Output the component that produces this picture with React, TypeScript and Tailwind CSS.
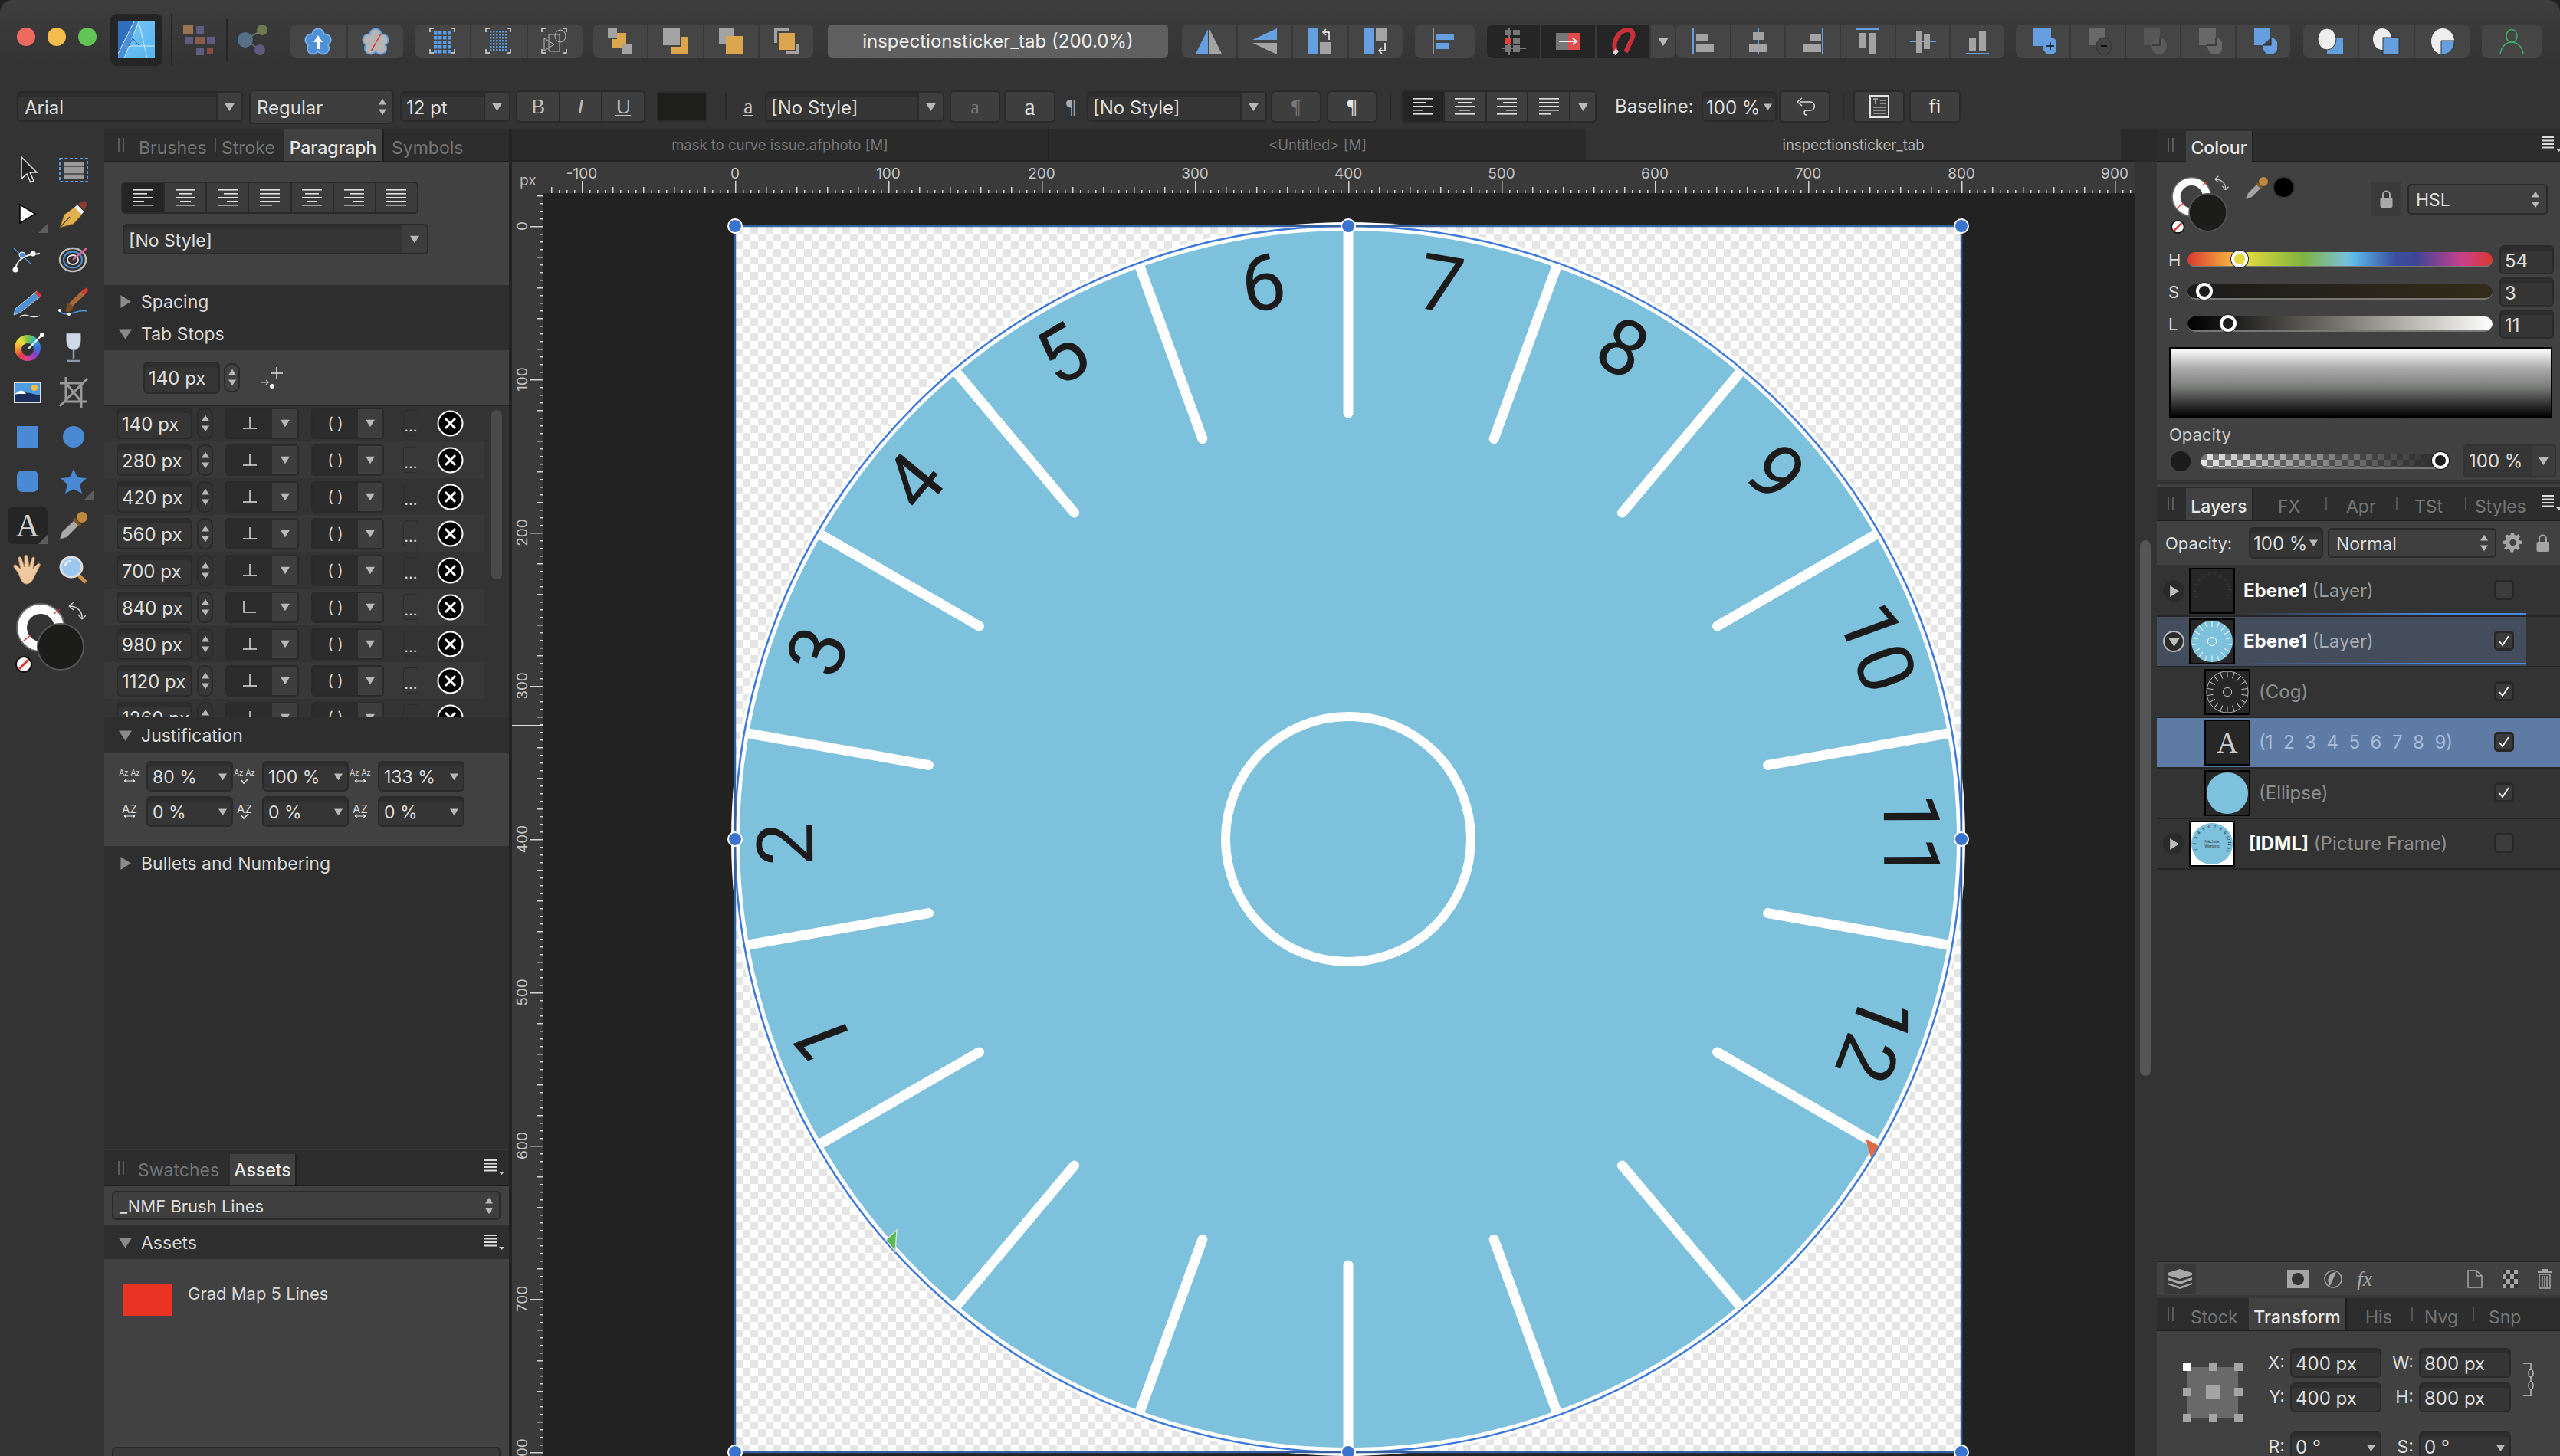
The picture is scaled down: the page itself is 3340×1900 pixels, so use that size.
import React from "react";

type CN = { className?: string; children?: React.ReactNode };

const Tri = ({ d = "down", s = 14, c = "#b8b8b8" }: { d?: string; s?: number; c?: string }) => (
  <svg width={s} height={s} viewBox="0 0 14 14" className="shrink-0">
    <polygon fill={c} points={d === "down" ? "0,2 14,2 7,13" : d === "up" ? "0,12 14,12 7,1" : "2,0 13,7 2,14"} />
  </svg>
);
const Stepper = ({ className = "" }: { className?: string }) => (
  <div className={`flex flex-col items-center justify-center gap-[3px] ${className}`}>
    <Tri d="up" s={10} />
    <Tri d="down" s={10} />
  </div>
);
const Well = ({ className = "", children }: CN) => (
  <div className={`flex items-center shrink-0 overflow-hidden rounded-[6px] bg-[#353535] border-2 border-[#2a2a2a] shadow-[inset_0_5px_0_#2d2d2d] text-[#dedede] ${className}`}>{children}</div>
);
const Grip = ({ className = "" }: { className?: string }) => (
  <div className={`flex gap-[4px] shrink-0 h-[18px] ${className}`}>
    <div className="w-[2px] h-full bg-[#5b5b5b]" />
    <div className="w-[2px] h-full bg-[#5b5b5b]" />
  </div>
);
const Menu = ({ className = "" }: { className?: string }) => (
  <svg width="26" height="24" viewBox="0 0 26 24" className={`shrink-0 ${className}`}>
    <path d="M0 2h16M0 6.500h16M0 11h16M0 15.500h16" stroke="#ddd" strokeWidth="2" />
    <polygon points="19,17 26,17 22.500,21" fill="#ccc" />
  </svg>
);
const Tab = ({ t, on, className = "" }: { t: string; on?: boolean; className?: string }) => (
  <div className={`flex items-center h-full shrink-0 whitespace-nowrap text-[23px] pt-[8px] ${on ? "justify-center bg-[#414141] text-[#e8e8e8] font-medium border-r-2 border-[#1f1f1f]" : "text-[#757575]"} ${className}`}>{t}</div>
);
const TSep = ({ className = "" }: { className?: string }) => <div className={`w-[2px] h-[18px] bg-[#555] shrink-0 ${className}`} />;

/* ---------- top toolbar icons ---------- */
const S36 = ({ children }: CN) => <svg width="36" height="36" viewBox="0 0 36 36" className="shrink-0">{children}</svg>;
const Flower = ({ fill, line, slash }: { fill: string; line: string; slash?: boolean }) => {
  const pts = [[18, 9], [9, 16], [27, 16], [11.500, 27], [24.500, 27]];
  return (
    <S36>
      {pts.map((p, i) => <circle key={i} cx={p[0]} cy={p[1]} r={8.600} fill={line} />)}
      {pts.map((p, i) => <circle key={i} cx={p[0]} cy={p[1]} r={6.800} fill={fill} />)}
      <circle cx="18" cy="18" r="8" fill={fill} />
      {slash ? <path d="M25 8 L12 31" stroke="#e0352b" strokeWidth="1.500" /> : <polygon points="18,10 12,19 16,19 16,28 20,28 20,19 24,19" fill="#fff" />}
    </S36>
  );
};
const Brackets = () => <path d="M1 6V1H6M28 1h5v5M33 28v5h-5M6 33H1v-5" stroke="#ddd" strokeWidth="1.500" fill="none" />;
const Dots = ({ cols, rows, s, p, x0, y0 }: { cols: number; rows: number; s: number; p: number; x0: number; y0: number }) => (
  <>
    {Array.from({ length: cols * rows }).map((_, i) => (
      <rect key={i} x={x0 + (i % cols) * p} y={y0 + Math.floor(i / cols) * p} width={s} height={s} fill="#5b9be0" />
    ))}
  </>
);
const G = "#a3a3a3";
const O = "#dca64f";
const B = "#659fe0";

const Btn = ({ children, className = "" }: CN) => <div className={`flex-1 flex items-center justify-center border-r-2 border-[#383838] last:border-r-0 ${className}`}>{children}</div>;
const Grp = ({ className = "", children }: CN) => <div className={`flex h-[44px] mt-[4px] rounded-[8px] bg-[#454545] overflow-hidden shrink-0 ${className}`}>{children}</div>;

const Toolbar1 = () => (
  <div className="flex items-center h-[68px] mt-[18px] pl-[22px]">
    <div className="flex gap-[16px] shrink-0 mt-[-8px]">
      <div className="w-[24px] h-[24px] rounded-full bg-[#ee6a5f]" />
      <div className="w-[24px] h-[24px] rounded-full bg-[#f5bd4f]" />
      <div className="w-[24px] h-[24px] rounded-full bg-[#61c454]" />
    </div>
    <div className="ml-[18px] w-[68px] h-[68px] rounded-[8px] bg-[#252525] flex items-center justify-center shrink-0">
      <svg width="48" height="48" viewBox="0 0 48 48">
        <defs><linearGradient id="ag" x1="0" y1="0" x2="1" y2="1"><stop offset="0" stopColor="#7cc8f5" /><stop offset="1" stopColor="#55b4f0" /></linearGradient></defs>
        <rect width="48" height="48" fill="url(#ag)" />
        <polygon points="0,0 21,0 0,42" fill="#2f6dbd" />
        <polygon points="0,42 21,0 27,0 8,48 0,48" fill="#4a8fd8" />
        <path d="M0 42 L21 0 M8 48 L27 0 M27 0 L38 48 M14 32 L48 32" stroke="#d6eefc" strokeWidth="1" fill="none" />
        <path d="M14 32 L19 22 L28 32" stroke="#23507f" strokeWidth="1" fill="none" />
      </svg>
    </div>
    <div className="ml-[11px] w-[2px] h-[68px] bg-[#252525] shrink-0" />
    <svg width="42" height="40" viewBox="0 0 42 40" className="ml-[14px] shrink-0">
      <rect x="0" y="0" width="13" height="12" fill="#9a7350" />
      <rect x="17" y="2" width="10" height="10" fill="#5e5c80" />
      <rect x="3" y="16" width="10" height="10" fill="#5e5c80" />
      <rect x="16" y="16" width="12" height="10" fill="#8a5a4c" />
      <rect x="31" y="16" width="10" height="10" fill="#5e5c80" />
      <rect x="17" y="30" width="10" height="10" fill="#5e5c80" />
      <rect x="31" y="30" width="8" height="8" fill="#8a4a44" />
    </svg>
    <div className="ml-[14px] w-[2px] h-[54px] bg-[#252525] shrink-0" />
    <svg width="41" height="40" viewBox="0 0 41 40" className="ml-[13px] shrink-0">
      <path d="M10 20 L32 7 M10 20 L29 33" stroke="#777" strokeWidth="1.500" />
      <circle cx="10" cy="20" r="10" fill="#557088" />
      <circle cx="32" cy="7" r="7" fill="#6d7a4f" />
      <circle cx="29" cy="33" r="7" fill="#5e5a80" />
    </svg>
    <Grp className="ml-[28px] w-[147px]">
      <Btn><Flower fill="#4f8fd6" line="#79b1ea" /></Btn>
      <Btn><Flower fill="#b5b5b5" line="#5f9be0" slash /></Btn>
    </Grp>
    <Grp className="ml-[16px] w-[218px]">
      <Btn><S36><Brackets /><Dots cols={4} rows={5} s={4.500} p={6} x0={6} y0={5} /></S36></Btn>
      <Btn><S36><Brackets /><Dots cols={6} rows={7} s={2.500} p={4} x0={6} y0={4} /></S36></Btn>
      <Btn><S36><Brackets /><path d="M4 14 L17 22 L4 30 Z M10 9 H24 V31 H10 Z" stroke="#bbb" strokeWidth="1" fill="none" /><ellipse cx="25" cy="11" rx="7" ry="8" stroke="#bbb" strokeWidth="1" fill="none" /></S36></Btn>
    </Grp>
    <Grp className="ml-[14px] w-[287px]">
      <Btn><S36><rect x="2" y="1" width="12" height="13" fill={G} /><rect x="14" y="7" width="12" height="14" fill={O} /><rect x="7" y="15" width="14" height="12" fill={O} /><rect x="21" y="22" width="12" height="13" fill={G} /></S36></Btn>
      <Btn><S36><rect x="2" y="1" width="22" height="22" fill={G} /><polygon points="26,12 34,12 34,34 13,34 13,25 26,25" fill={O} /></S36></Btn>
      <Btn><S36><rect x="2" y="1" width="20" height="20" fill={G} /><rect x="11" y="11" width="22" height="23" fill={O} /></S36></Btn>
      <Btn><S36><polygon points="2,1 22,1 22,5 6,5 6,20 2,20" fill={G} /><rect x="8" y="7" width="21" height="22" fill={O} /><polygon points="30,22 34,22 34,35 18,35 18,31 30,31" fill={G} /></S36></Btn>
    </Grp>
    <div className="ml-[19px] w-[444px] h-[44px] mt-[4px] rounded-[6px] bg-[#5f5f5f] flex items-center justify-center shrink-0 text-[24px] text-[#ededed] whitespace-nowrap">inspectionsticker_tab (200.0%)</div>
    <Grp className="ml-[18px] w-[288px]">
      <Btn><S36><polygon points="17,2 17,34 1,34" fill={B} /><polygon points="19,2 19,34 35,34" fill={G} /></S36></Btn>
      <Btn><S36><polygon points="34,1 34,16 2,16" fill={B} /><polygon points="2,20 34,20 34,35" fill={G} /></S36></Btn>
      <Btn><S36><rect x="2" y="1" width="14" height="34" fill={B} /><rect x="18" y="19" width="15" height="16" fill={G} /><path d="M30 16V6H23M26 2 L22 6 L26 10" stroke="#fff" strokeWidth="1.500" fill="none" /></S36></Btn>
      <Btn><S36><rect x="2" y="1" width="14" height="34" fill={B} /><rect x="18" y="1" width="15" height="16" fill={G} /><path d="M30 20V30H23M26 26 L22 30 L26 34" stroke="#fff" strokeWidth="1.500" fill="none" /></S36></Btn>
    </Grp>
    <Grp className="ml-[16px] w-[78px]">
      <Btn><S36><path d="M3 1V35" stroke="#aaa" strokeWidth="1.500" /><rect x="6" y="8" width="24" height="8" fill={B} /><rect x="6" y="20" width="17" height="8" fill={B} /></S36></Btn>
    </Grp>
    <Grp className="ml-[16px] w-[246px] !bg-[#252525]">
      <Btn className="!border-[#3a3a3a]"><svg width="36" height="36" viewBox="0 0 36 36"><path d="M12 0V36M2 27H34" stroke="#ccc" strokeWidth="1" /><rect x="6" y="3" width="9" height="7" fill="#777" /><rect x="17" y="3" width="9" height="7" fill="#777" /><rect x="6" y="13" width="9" height="8" fill="#e23f3f" /><rect x="17" y="13" width="9" height="8" fill="#777" /><rect x="6" y="23" width="9" height="9" fill="#777" /><rect x="17" y="23" width="9" height="9" fill="#777" /></svg></Btn>
      <Btn className="!border-[#3a3a3a]"><S36><rect x="2" y="7" width="16" height="22" fill="#777" /><rect x="18" y="7" width="16" height="22" fill="#e24b4b" /><path d="M6 18H28M24 14 L29 18 L24 22" stroke="#eee" strokeWidth="2" fill="none" /></S36></Btn>
      <Btn><svg width="36" height="36" viewBox="0 0 36 36"><path d="M9 31 C4 20 12 4 24 3 C32 3 33 9 30 15 L22 32" stroke="#c92f3c" strokeWidth="6" fill="none" /><path d="M7 35 L11 29" stroke="#ddd" strokeWidth="5" /></svg></Btn>
      <div className="w-[32px] shrink-0 flex items-center justify-center bg-[#454545]"><Tri s={14} /></div>
    </Grp>
    <Grp className="ml-[1px] w-[428px]">
      <Btn><S36><path d="M5 1V35" stroke={B} strokeWidth="2" /><rect x="9" y="8" width="15" height="10" fill={G} /><rect x="9" y="22" width="23" height="10" fill={G} /></S36></Btn>
      <Btn><S36><path d="M18 1V35" stroke={B} strokeWidth="2" /><rect x="11" y="6" width="14" height="10" fill={G} /><rect x="6" y="21" width="24" height="11" fill={G} /></S36></Btn>
      <Btn><S36><path d="M31 1V35" stroke={B} strokeWidth="2" /><rect x="14" y="8" width="15" height="10" fill={G} /><rect x="5" y="22" width="24" height="10" fill={G} /></S36></Btn>
      <Btn><S36><path d="M3 2H33" stroke={B} strokeWidth="2" /><rect x="7" y="7" width="9" height="20" fill={G} /><rect x="20" y="7" width="9" height="27" fill={G} /></S36></Btn>
      <Btn><S36><path d="M1 18H35" stroke={B} strokeWidth="2" /><rect x="9" y="4" width="8" height="29" fill={G} /><rect x="19" y="8" width="8" height="20" fill={G} /></S36></Btn>
      <Btn><S36><path d="M3 34H33" stroke={B} strokeWidth="2" /><rect x="7" y="13" width="9" height="18" fill={G} /><rect x="20" y="4" width="9" height="27" fill={G} /></S36></Btn>
    </Grp>
    <Grp className="ml-[15px] w-[358px]">
      <Btn><S36><rect x="6" y="1" width="23" height="23" fill={B} /><ellipse cx="28" cy="24" rx="10" ry="11" fill={B} /><path d="M28 19V29M23 24H33" stroke="#111" strokeWidth="1.500" /></S36></Btn>
      <Btn><S36><rect x="6" y="1" width="22" height="22" fill="#686868" /><ellipse cx="26" cy="24" rx="10" ry="11" fill="#444" stroke="#333" /><path d="M22 24H30" stroke="#111" strokeWidth="2" /></S36></Btn>
      <Btn><S36><rect x="6" y="1" width="21" height="22" fill="#555" /><ellipse cx="26" cy="24" rx="10" ry="11" fill="#5b5b5b" /><path d="M17 23H27V13" fill="none" stroke="#333" strokeWidth="1.500" /></S36></Btn>
      <Btn><S36><rect x="6" y="1" width="22" height="22" fill="#686868" /><ellipse cx="27" cy="24" rx="10" ry="11" fill="#686868" /><path d="M17 23H28V13" fill="none" stroke="#333" strokeWidth="1.500" /></S36></Btn>
      <Btn><S36><rect x="6" y="1" width="21" height="22" fill={B} /><ellipse cx="27" cy="24" rx="10" ry="11" fill={B} /><path d="M17 23H28V13" fill="#454545" stroke="#222" strokeWidth="1" /></S36></Btn>
    </Grp>
    <Grp className="ml-[17px] w-[217px]">
      <Btn><S36><rect x="13" y="14" width="21" height="21" fill={B} /><ellipse cx="13" cy="15" rx="12" ry="14" fill="#eee" stroke="#333" /></S36></Btn>
      <Btn><S36><ellipse cx="12" cy="15" rx="12" ry="14" fill="#eee" /><rect x="13" y="13" width="21" height="22" fill={B} stroke="#333" /></S36></Btn>
      <Btn><S36><ellipse cx="18" cy="18" rx="15" ry="17" fill="#eee" /><path d="M16 17H33A15 17 0 0 1 16 35Z" fill={B} stroke="#333" /></S36></Btn>
    </Grp>
    <Grp className="ml-[16px] w-[78px]">
      <Btn><S36><ellipse cx="18" cy="11" rx="7" ry="8.500" fill="none" stroke="#3eb06e" strokeWidth="1.500" /><path d="M3 34C5 23 12 19 18 19C24 19 31 23 33 34" fill="none" stroke="#3eb06e" strokeWidth="1.500" /></S36></Btn>
    </Grp>
  </div>
);

const Serif = "font-['Liberation_Serif',serif]";
const Ghost = ({ className = "", children }: CN) => <div className={`flex items-center justify-center shrink-0 h-[42px] rounded-[6px] bg-[#3e3e3e] border-2 border-[#2a2a2a] ${className}`}>{children}</div>;
const AlignLines = ({ m, n = 4 }: { m: string; n?: number }) => {
  const long = [26, 18, 26, 14, 26];
  return (
    <svg width="26" height="22" viewBox="0 0 26 22" className="shrink-0">
      {Array.from({ length: n + 1 }).map((_, i) => {
        const w = m === "j" ? 26 : i === n && m === "jl" ? 16 : m === "jl" ? 26 : long[i];
        const x = m === "c" ? (26 - w) / 2 : m === "r" ? 26 - w : 0;
        return <rect key={i} x={x} y={i * 5} width={w} height="1.600" fill="#e2e2e2" />;
      })}
    </svg>
  );
};
const Toolbar2 = () => (
  <div className="flex items-center h-[46px] mt-[30px] pl-[22px] text-[24px] text-[#dcdcdc]">
    <Well className="w-[295px] h-[40px]"><span className="pl-[8px] pt-[3px] flex-1">Arial</span><div className="w-[33px] h-full flex items-center justify-center border-l-2 border-[#2a2a2a] bg-[#3d3d3d]"><Tri s={13} /></div></Well>
    <Ghost className="ml-[8px] w-[189px] !h-[45px] !justify-between px-[8px]"><span className="pt-[3px]">Regular</span><Stepper /></Ghost>
    <Well className="ml-[8px] w-[144px] h-[40px]"><span className="pl-[6px] pt-[3px] flex-1">12 pt</span><div className="w-[33px] h-full flex items-center justify-center border-l-2 border-[#2a2a2a] bg-[#3d3d3d]"><Tri s={13} /></div></Well>
    <div className={`ml-[7px] w-[169px] h-[42px] flex rounded-[6px] bg-[#3e3e3e] border-2 border-[#2a2a2a] overflow-hidden shrink-0 text-[28px] text-[#bdbdbd] ${Serif}`}>
      <Btn className="!border-[#2a2a2a]">B</Btn>
      <Btn className="!border-[#2a2a2a] italic">I</Btn>
      <Btn className="underline">U</Btn>
    </div>
    <div className="ml-[15px] w-[66px] h-[40px] rounded-[4px] bg-[#1e1e1c] border-2 border-[#2c2c2c] shrink-0" />
    <div className="ml-[23px] w-[2px] h-[36px] bg-[#282828] shrink-0" />
    <span className={`ml-[22px] w-[18px] text-[28px] text-[#c4c4c4] underline shrink-0 ${Serif}`}>a</span>
    <Well className="ml-[10px] w-[234px] h-[40px]"><span className="pl-[6px] pt-[3px] flex-1 whitespace-nowrap">[No Style]</span><div className="w-[33px] h-full flex items-center justify-center border-l-2 border-[#2a2a2a] bg-[#3d3d3d]"><Tri s={13} /></div></Well>
    <Ghost className={`ml-[7px] w-[66px] text-[26px] text-[#777] ${Serif}`}>a</Ghost>
    <Ghost className={`ml-[5px] w-[67px] text-[32px] text-[#e4e4e4] ${Serif}`}>a</Ghost>
    <span className={`ml-[14px] w-[14px] text-[28px] text-[#aaa] shrink-0 ${Serif}`}>¶</span>
    <Well className="ml-[13px] w-[235px] h-[40px]"><span className="pl-[6px] pt-[3px] flex-1 whitespace-nowrap">[No Style]</span><div className="w-[33px] h-full flex items-center justify-center border-l-2 border-[#2a2a2a] bg-[#3d3d3d]"><Tri s={13} /></div></Well>
    <Ghost className={`ml-[5px] w-[66px] text-[26px] text-[#777] ${Serif}`}>¶</Ghost>
    <Ghost className={`ml-[7px] w-[66px] text-[28px] text-[#e4e4e4] ${Serif}`}>¶</Ghost>
    <div className="ml-[16px] w-[2px] h-[36px] bg-[#282828] shrink-0" />
    <div className="ml-[13px] w-[255px] h-[42px] flex rounded-[6px] bg-[#3e3e3e] border-2 border-[#2a2a2a] overflow-hidden shrink-0">
      <Btn className="!border-[#2a2a2a] bg-[#242424]"><AlignLines m="l" /></Btn>
      <Btn className="!border-[#2a2a2a]"><AlignLines m="c" /></Btn>
      <Btn className="!border-[#2a2a2a]"><AlignLines m="r" /></Btn>
      <Btn className="!border-[#2a2a2a]"><AlignLines m="jl" /></Btn>
      <div className="w-[32px] shrink-0 flex items-center justify-center"><Tri s={13} /></div>
    </div>
    <span className="ml-[24px] w-[98px] shrink-0">Baseline:</span>
    <Well className="ml-[15px] w-[98px] h-[40px]"><span className="pl-[4px] pt-[3px] flex-1 whitespace-nowrap">100 %</span><div className="pr-[4px]"><Tri s={11} /></div></Well>
    <Ghost className="ml-[3px] w-[67px]"><svg width="30" height="30" viewBox="0 0 30 30"><path d="M8 9H22C29 9 29 20 22 20H17C13 20 13 26 17 26" fill="none" stroke="#ddd" strokeWidth="1.500" /><path d="M11 4 L5 9 L11 14" fill="none" stroke="#ddd" strokeWidth="1.500" /></svg></Ghost>
    <div className="ml-[16px] w-[2px] h-[36px] bg-[#282828] shrink-0" />
    <Ghost className="ml-[12px] w-[67px]"><svg width="26" height="30" viewBox="0 0 26 30"><rect x="1" y="1" width="24" height="28" fill="none" stroke="#e4e4e4" strokeWidth="2" /><path d="M5 5H11M8 5V12M14 7H21M14 11H21M5 16H21M5 20H21M5 24H21" stroke="#ddd" strokeWidth="1.200" /></svg></Ghost>
    <Ghost className={`ml-[6px] w-[67px] text-[28px] text-[#e4e4e4] ${Serif}`}>fi</Ghost>
  </div>
);

/* ---------- tools ---------- */
const T40 = ({ children }: CN) => <svg width="44" height="44" viewBox="0 0 44 44">{children}</svg>;
const Corner = () => <svg width="12" height="12" viewBox="0 0 12 12" className="absolute right-[4px] bottom-[5px]"><polygon points="12,0 12,12 0,12" fill="#5e5e5e" /></svg>;
const ToolCell = ({ children, className = "" }: CN) => <div className={`relative w-[60px] h-[58px] flex items-center justify-center ${className}`}>{children}</div>;
const Tools = () => (
  <div className="w-[136px] shrink-0 bg-[#333] pt-[25px] pl-[6px]">
    <div className="grid grid-cols-[60px_60px]">
      <ToolCell><T40><path d="M14 5 L14 33 L21 27 L26 38 L30 36 L25 25 L34 25 Z" fill="#222" stroke="#e4e4e4" strokeWidth="1.500" /></T40></ToolCell>
      <ToolCell><T40><rect x="4" y="7" width="36" height="30" fill="none" stroke="#5b9be0" strokeWidth="2" strokeDasharray="4 2.500" /><rect x="9" y="11" width="26" height="22" fill="#9a9a9a" /><path d="M9 17H35M9 27H35" stroke="#555" strokeWidth="2" /></T40></ToolCell>
      <ToolCell><T40><polygon points="12,9 12,33 32,21" fill="#fff" stroke="#000" strokeWidth="1.500" /></T40><Corner /></ToolCell>
      <ToolCell><T40><polygon points="4,39 10,22 24,12 33,22 22,34" fill="#e2b04f" stroke="#8a6a2a" /><path d="M4 39 L17 25" stroke="#553" strokeWidth="1.500" /><path d="M25 11 L34 20" stroke="#eee" strokeWidth="5" /><polygon points="28,8 36,4 40,8 36,17" fill="#8a3b30" /></T40></ToolCell>
      <ToolCell><T40><path d="M6 39 C6 25 14 16 38 15" fill="none" stroke="#eee" strokeWidth="2" /><path d="M4 8 L26 28" stroke="#4f8fd6" strokeWidth="1.500" /><circle cx="15" cy="17" r="4" fill="#4f8fd6" stroke="#fff" /><circle cx="29" cy="15" r="3.500" fill="#fff" /><circle cx="6" cy="36" r="3.500" fill="#fff" /></T40></ToolCell>
      <ToolCell><T40><ellipse cx="21" cy="23" rx="17" ry="15" fill="none" stroke="#bbb" strokeWidth="2.500" /><ellipse cx="21" cy="23" rx="12" ry="10.500" fill="none" stroke="#4f8fd6" strokeWidth="2" /><ellipse cx="21" cy="23" rx="7" ry="6" fill="none" stroke="#ddd" strokeWidth="2" /><path d="M21 23 L39 8" stroke="#d5609a" strokeWidth="2.500" /></T40></ToolCell>
      <ToolCell><T40><path d="M34 6 L40 12 L12 34 L4 37 L6 29 Z" fill="#4f8fd6" stroke="#bcd" /><path d="M33 7 L39 13" stroke="#d33" strokeWidth="4" /><path d="M12 40 C20 32 26 44 38 38" fill="none" stroke="#eee" strokeWidth="1.200" /></T40></ToolCell>
      <ToolCell><T40><path d="M18 24 L36 7" stroke="#a8693a" strokeWidth="6" /><path d="M34 9 L40 3" stroke="#d33" strokeWidth="5" /><path d="M14 22 C20 22 24 28 18 32 C14 35 10 32 12 30" fill="#7a4a24" /><path d="M2 30 C12 44 26 28 40 32" fill="none" stroke="#4f8fd6" strokeWidth="1.500" /><circle cx="4" cy="31" r="2" fill="#fff" /><circle cx="16" cy="36" r="2" fill="#fff" /></T40></ToolCell>
      <ToolCell>
        <div className="relative w-[34px] h-[34px] rounded-full bg-[conic-gradient(#7dc242,#34b0c8,#3a6fd8,#8a3fc8,#d63f9a,#e23f3f,#f5a030,#f0e040,#7dc242)]">
          <svg width="44" height="44" viewBox="0 0 44 44" className="absolute left-[-2px] top-[-8px]"><circle cx="19" cy="27" r="8" fill="#333" /><path d="M20 26 L38 8" stroke="#fff" strokeWidth="2" /><circle cx="38" cy="8" r="3" fill="#fff" /></svg>
        </div>
      </ToolCell>
      <ToolCell><T40><path d="M13 3H31C32 18 30 24 22 25C14 24 12 18 13 3Z" fill="#cfd9e6" stroke="#8e9bb0" /><path d="M22 25V37M14 39H30" stroke="#8e9bb0" strokeWidth="2.500" /></T40></ToolCell>
      <ToolCell><T40><rect x="4" y="8" width="36" height="28" fill="#ddd" /><rect x="6" y="10" width="32" height="24" fill="#4f9be0" /><path d="M6 26 C14 20 22 22 38 26V34H6Z" fill="#1c2e5a" /><circle cx="31" cy="16" r="4" fill="#f0c040" /><path d="M6 24 C12 18 16 19 20 24Z" fill="#fff" /></T40></ToolCell>
      <ToolCell><T40><path d="M12 2V34H40M4 10H32V42M4 40 L40 4M12 10 L32 34" fill="none" stroke="#999" strokeWidth="3" /></T40></ToolCell>
      <ToolCell><div className="w-[28px] h-[28px] bg-[#4a8ad4]" /></ToolCell>
      <ToolCell><div className="w-[28px] h-[28px] rounded-full bg-[#4a8ad4]" /></ToolCell>
      <ToolCell><div className="w-[28px] h-[28px] rounded-[7px] bg-[#4a8ad4]" /></ToolCell>
      <ToolCell><svg width="34" height="32" viewBox="0 0 34 32"><polygon points="17,0 22,11 34,12 25,20 28,32 17,26 6,32 9,20 0,12 12,11" fill="#4a8ad4" /></svg><Corner /></ToolCell>
      <ToolCell><div className={`relative w-[52px] h-[48px] rounded-[6px] bg-[#252525] flex items-center justify-center text-[42px] leading-none text-[#d0d0d0] ${Serif}`}>A</div><Corner /></ToolCell>
      <ToolCell><T40><path d="M4 40 L7 30 L24 14 L30 20 L13 37 Z" fill="#aaa" stroke="#666" /><circle cx="33" cy="11" r="7" fill="#c08a3e" /><path d="M22 13 L31 22" stroke="#7a5525" strokeWidth="4" /></T40></ToolCell>
      <ToolCell><T40><path d="M10 26 L4 18 C3 15 6 14 8 16 L13 21 L10 7 C10 4 13 4 14 7 L18 18 L18 4 C18 2 22 2 22 4 L24 18 L28 6 C29 4 32 5 31 8 L29 20 L35 14 C37 12 39 14 38 16 L31 30 C28 38 24 40 20 40 C15 40 13 34 10 26Z" fill="#f0c8a0" stroke="#b88a60" /></T40></ToolCell>
      <ToolCell><T40><path d="M26 26 L38 38" stroke="#c8904a" strokeWidth="5" /><ellipse cx="19" cy="18" rx="14" ry="13" fill="#9cc8f0" stroke="#ddd" strokeWidth="3" /><path d="M11 16 C12 12 15 10 19 10" stroke="#fff" strokeWidth="2" fill="none" /></T40></ToolCell>
    </div>
    <ColorWidget className="ml-[14px] mt-[12px]" />
  </div>
);
const ColorWidget = ({ className = "", small }: { className?: string; small?: boolean }) => (
  <svg width={small ? 80 : 92} height={small ? 76 : 93} viewBox="0 0 92 93" className={`shrink-0 ${className}`}>
    <circle cx="33" cy="34" r="25" fill="none" stroke="#666" strokeWidth="14" />
    <circle cx="33" cy="34" r="24" fill="none" stroke="#fff" strokeWidth="12" />
    <path d="M10 52 L20 44M50 16 L58 10" stroke="#e0352b" strokeWidth="1.500" />
    <circle cx="59" cy="59" r="30" fill="#1c1c1b" stroke="#555" strokeWidth="2" />
    <circle cx="11" cy="82" r="10" fill="#fff" stroke="#111" strokeWidth="2" />
    <path d="M5 88 L17 76" stroke="#e0352b" strokeWidth="3" />
    <path d="M70 6 C82 6 88 14 87 23M70 6 L76 1M70 6 L76 11M87 23 L82 17M87 23 L92 18" fill="none" stroke="#ccc" strokeWidth="1.500" />
  </svg>
);

/* ---------- left panel ---------- */
const SecHead = ({ t, open, className = "" }: { t: string; open?: boolean; className?: string }) => (
  <div className={`flex items-center h-[44px] bg-[#2e2e2e] pl-[19px] text-[23px] text-[#d8d8d8] shrink-0 ${className}`}>
    <Tri d={open ? "down" : "right"} s={17} c="#8a8a8a" />
    <span className="ml-[12px] pt-[2px] whitespace-nowrap">{t}</span>
  </div>
);
const Dots3 = () => <div className="ml-[25px] w-[20px] h-[34px] rounded-[4px] border border-[#2c2c2c] flex items-end justify-center pb-[2px] text-[20px] leading-none text-[#ddd] shrink-0">...</div>;
const XBtn = () => (
  <svg width="35" height="35" viewBox="0 0 35 35" className="ml-[24px] shrink-0">
    <circle cx="17.500" cy="17.500" r="16" fill="#000" stroke="#fff" strokeWidth="2" />
    <path d="M11 11 L24 24M24 11 L11 24" stroke="#fff" strokeWidth="3" />
  </svg>
);
const TabRow = ({ v, alt, corner }: { v: string; alt?: boolean; corner?: boolean }) => (
  <div className={`flex items-center h-[48px] w-[496px] pl-[16px] shrink-0 ${alt ? "bg-[#383838]" : ""}`}>
    <Well className="w-[99px] h-[41px]"><span className="pl-[5px] pt-[3px] text-[24px] whitespace-nowrap">{v}</span></Well>
    <Stepper className="ml-[6px] w-[21px] h-[41px] rounded-[9px] border-2 border-[#2a2a2a]" />
    <div className="ml-[16px] w-[96px] h-[41px] flex rounded-[5px] border-2 border-[#2a2a2a] overflow-hidden shrink-0">
      <div className="w-[59px] bg-[#2c2c2c] flex items-center justify-center">
        <svg width="20" height="18" viewBox="0 0 20 18">{corner ? <path d="M2 1V16H18" fill="none" stroke="#ddd" strokeWidth="1.500" /> : <path d="M10 1V16M1 16H19" fill="none" stroke="#ddd" strokeWidth="1.500" />}</svg>
      </div>
      <div className="flex-1 bg-[#3e3e3e] flex items-center justify-center"><Tri s={12} /></div>
    </div>
    <div className="ml-[16px] w-[95px] h-[41px] flex rounded-[5px] border-2 border-[#2a2a2a] overflow-hidden shrink-0">
      <div className="w-[59px] bg-[#2c2c2c] flex items-center justify-center text-[20px] text-[#ddd] whitespace-pre">( )</div>
      <div className="flex-1 bg-[#3e3e3e] flex items-center justify-center"><Tri s={12} /></div>
    </div>
    <Dots3 />
    <XBtn />
  </div>
);
const JIcon = ({ a, check, small }: { a: string; check?: boolean; small?: boolean }) => (
  <svg width="30" height="24" viewBox="0 0 30 24" className="shrink-0">
    <text x="15" y={small ? 11 : 14} textAnchor="middle" fontSize={small ? 10 : 15} fill="#ddd" fontFamily="Inter">{a}</text>
    {check ? <path d="M11 17 L14 21 L20 15" fill="none" stroke="#eee" strokeWidth="1.500" /> : <path d="M8 18H22M8 18l3-2M8 18l3 2M22 18l-3-2M22 18l-3 2" fill="none" stroke="#eee" strokeWidth="1.200" />}
  </svg>
);
const JCombo = ({ v, className = "" }: { v: string; className?: string }) => (
  <Well className={`w-[113px] h-[40px] justify-between pl-[6px] pr-[6px] text-[23px] ${className}`}><span className="pt-[3px] whitespace-nowrap">{v}</span><Tri s={11} /></Well>
);

const LeftPanel = () => (
  <div className="w-[528px] shrink-0 flex flex-col bg-[#2e2e2e] text-[22px] overflow-hidden">
    <div className="flex items-center h-[44px] border-b-2 border-[#1f1f1f] bg-[#2d2d2d] shrink-0">
      <Grip className="ml-[18px]" />
      <Tab t="Brushes" className="ml-[19px] w-[99px]" />
      <TSep />
      <Tab t="Stroke" className="ml-[7px] w-[81px]" />
      <Tab t="Paragraph" on className="w-[131px]" />
      <Tab t="Symbols" className="ml-[10px]" />
    </div>
    <div className="h-[160px] bg-[#414141] pt-[25px] pl-[22px] shrink-0">
      <div className="flex w-[388px] h-[42px] rounded-[6px] bg-[#3c3c3c] border-2 border-[#2a2a2a] overflow-hidden">
        <Btn className="!border-[#2a2a2a] bg-[#242424]"><AlignLines m="l" /></Btn>
        <Btn className="!border-[#2a2a2a]"><AlignLines m="c" /></Btn>
        <Btn className="!border-[#2a2a2a]"><AlignLines m="r" /></Btn>
        <Btn className="!border-[#2a2a2a]"><AlignLines m="jl" /></Btn>
        <Btn className="!border-[#2a2a2a]"><AlignLines m="c" /></Btn>
        <Btn className="!border-[#2a2a2a]"><AlignLines m="r" /></Btn>
        <Btn><AlignLines m="j" /></Btn>
      </div>
      <Well className="mt-[13px] ml-[2px] w-[399px] h-[40px]"><span className="pl-[6px] pt-[5px] flex-1 text-[23px]">[No Style]</span><div className="w-[33px] h-full flex items-center justify-center bg-[#3d3d3d]"><Tri s={12} /></div></Well>
    </div>
    <SecHead t="Spacing" className="!h-[42px]" />
    <SecHead t="Tab Stops" open className="!h-[43px]" />
    <div className="flex items-center h-[71px] bg-[#414141] shrink-0 pl-[51px]">
      <Well className="w-[100px] h-[42px]"><span className="pl-[5px] pt-[3px] text-[24px] whitespace-nowrap">140 px</span></Well>
      <Stepper className="ml-[5px] w-[21px] h-[38px] rounded-[9px] border-2 border-[#2a2a2a]" />
      <svg width="32" height="30" viewBox="0 0 32 30" className="ml-[26px]"><path d="M22 1V17M14 9H30" stroke="#ddd" strokeWidth="1.500" /><path d="M1 21H11M8 18l3 3-3 3" stroke="#ccc" strokeWidth="1.200" fill="none" /><circle cx="16" cy="26" r="3" fill="#eee" /></svg>
    </div>
    <div className="relative h-[408px] bg-[#333] border-t-2 border-[#262626] overflow-hidden shrink-0">
      <div className="mt-[-2px]">
        <TabRow v="140 px" />
        <TabRow v="280 px" alt />
        <TabRow v="420 px" />
        <TabRow v="560 px" alt />
        <TabRow v="700 px" />
        <TabRow v="840 px" alt corner />
        <TabRow v="980 px" />
        <TabRow v="1120 px" alt />
        <TabRow v="1260 px" />
      </div>
      <div className="absolute left-[505px] top-[5px] w-[14px] h-[221px] rounded-full bg-[#4a4a4a]" />
    </div>
    <SecHead t="Justification" open className="!h-[46px]" />
    <div className="h-[122px] bg-[#414141] shrink-0 pl-[18px] pt-[11px]">
      <div className="flex items-center h-[40px]">
        <JIcon a="Az Az" small /><JCombo v="80 %" className="ml-[7px]" />
        <JIcon a="Az Az" small check /><JCombo v="100 %" className="ml-[8px]" />
        <JIcon a="Az Az" small /><JCombo v="133 %" className="ml-[8px]" />
      </div>
      <div className="flex items-center h-[40px] mt-[6px]">
        <JIcon a="AZ" /><JCombo v="0 %" className="ml-[7px]" />
        <JIcon a="AZ" check /><JCombo v="0 %" className="ml-[8px]" />
        <JIcon a="AZ" /><JCombo v="0 %" className="ml-[8px]" />
      </div>
    </div>
    <SecHead t="Bullets and Numbering" />
    <div className="h-[353px] bg-[#2e2e2e] shrink-0 border-b-2 border-[#383838]" />
    <div className="flex items-center h-[47px] bg-[#2d2d2d] border-b-2 border-[#1f1f1f] shrink-0">
      <Grip className="ml-[18px]" />
      <Tab t="Swatches" className="ml-[18px] w-[120px]" />
      <Tab t="Assets" on className="w-[87px] !mt-[6px] !h-[41px] !pt-[2px]" />
      <Menu className="ml-auto mr-[6px]" />
    </div>
    <div className="h-[52px] bg-[#414141] shrink-0 pl-[10px] pt-[6px] border-b-2 border-[#333]">
      <div className="flex items-center justify-between w-[507px] h-[38px] rounded-[5px] border-2 border-[#2a2a2a] bg-[#3f3f3f] px-[8px] text-[#ddd]"><span className="pt-[3px]">_NMF Brush Lines</span><Stepper /></div>
    </div>
    <div className="flex items-center h-[43px] bg-[#2e2e2e] pl-[19px] text-[23px] text-[#d8d8d8] shrink-0">
      <Tri s={17} c="#8a8a8a" /><span className="ml-[12px] pt-[2px]">Assets</span><Menu className="ml-auto mr-[6px]" />
    </div>
    <div className="flex-1 bg-[#414141] relative">
      <div className="flex items-start pt-[32px] pl-[24px]">
        <div className="w-[64px] h-[42px] bg-[#e93323] shrink-0" />
        <span className="ml-[21px] mt-[-3px] text-[#d8d8d8] text-[22px]">Grad Map 5 Lines</span>
      </div>
      <div className="absolute left-[10px] top-[245px] w-[507px] h-[40px] rounded-[5px] border-2 border-[#2a2a2a] bg-[#3a3a3a]" />
    </div>
  </div>
);

/* ---------- centre ---------- */
const Cx = 1759;
const Cy = 1095;
const range = (a: number, b: number, s: number) => {
  const o: number[] = [];
  for (let v = a; v <= b; v += s) o.push(v);
  return o;
};
const HRuler = () => (
  <svg width="2118" height="41" viewBox="668 211 2118 41" className="block shrink-0">
    <rect x="668" y="211" width="2118" height="41" fill="#3a3a3a" />
    {range(719, 2786, 10).map((x) => {
      const k = (x - 959) / 10;
      const h = k % 20 === 0 ? 16 : k % 4 === 0 ? 8 : 4;
      return <rect key={x} x={x} y={252 - h} width="1.500" height={h} fill="#d4d4d4" />;
    })}
    {range(-100, 900, 100).map((u) => (
      <text key={u} x={959 + 2 * u} y="233" textAnchor="middle" fontSize="19" fill="#c4c4c4" fontFamily="Inter">{u}</text>
    ))}
    <text x="678" y="242" fontSize="19" fill="#b8b8b8" fontFamily="Inter">px</text>
  </svg>
);
const VRuler = () => (
  <svg width="40" height="1648" viewBox="668 252 40 1648" className="block shrink-0">
    <rect x="668" y="252" width="40" height="1648" fill="#3a3a3a" />
    {range(255, 1900, 10).map((y) => {
      const k = (y - 295) / 10;
      const h = k % 20 === 0 ? 16 : k % 4 === 0 ? 8 : 3;
      return <rect key={y} x={708 - h} y={y} width={h} height="1.500" fill="#d4d4d4" />;
    })}
    {range(0, 800, 100).map((u) => (
      <text key={u} x="688" y={295 + 2 * u} textAnchor="middle" fontSize="19" fill="#c4c4c4" fontFamily="Inter" transform={`rotate(-90 688 ${295 + 2 * u})`}>{u}</text>
    ))}
    <rect x="668" y="946" width="40" height="2" fill="#ddd" />
  </svg>
);
const ticks = range(0, 340, 20);
const digitAngles = [-110.8, -90.5, -70.5, -50.5, -30.5, -8.7, 9.5, 29.2, 49.4, 70.1, 89.7, 110.7];
const Dial = () => (
  <g>
    <circle cx={Cx} cy={Cy} r="805" fill="#fff" />
    <circle cx={Cx} cy={Cy} r="794" fill="#7dc1dd" />
    {ticks.map((a) => <line key={a} x1={Cx} y1={Cy - 797} x2={Cx} y2={Cy - 556} stroke="#fff" strokeWidth="13" strokeLinecap="round" transform={`rotate(${a} ${Cx} ${Cy})`} />)}
    <circle cx={Cx} cy={Cy} r="160" fill="none" stroke="#fff" strokeWidth="12" />
    {digitAngles.map((a, i) => (
      <text key={i} x={Cx} y={Cy - 699} textAnchor="middle" fontSize="102" fill="#1b1b1b" fontFamily="Roboto" transform={`rotate(${a} ${Cx} ${Cy})`}>{i + 1}</text>
    ))}
    <circle cx={Cx} cy={Cy} r="800" fill="none" stroke="#3d78dc" strokeWidth="2.500" />
  </g>
);
const Canvas = () => (
  <svg width="2078" height="1648" viewBox="708 252 2078 1648" className="block">
    <defs>
      <pattern id="chk" x="959" y="295" width="20" height="20" patternUnits="userSpaceOnUse">
        <rect width="20" height="20" fill="#fff" />
        <rect width="10" height="10" fill="#e5e5e5" />
        <rect x="10" y="10" width="10" height="10" fill="#e5e5e5" />
      </pattern>
    </defs>
    <rect x="708" y="252" width="2078" height="1648" fill="#222" />
    <rect x="959" y="295" width="1600" height="1600" fill="url(#chk)" />
    <Dial />
    <rect x="959" y="295" width="1600" height="1600" fill="none" stroke="#35609f" strokeWidth="2.500" />
    <polygon points="2434,1486 2451,1495 2441,1511" fill="#df6b43" />
    <polygon points="1170,1605 1156,1618 1168,1633" fill="#5cb850" stroke="#cfe6d6" strokeWidth="1.500" />
    {[[959, 295], [Cx, 295], [2559, 295], [959, Cy], [2559, Cy], [959, 1895], [Cx, 1895], [2559, 1895]].map((p, i) => (
      <circle key={i} cx={p[0]} cy={p[1]} r="9" fill="#3a74cf" stroke="#fff" strokeWidth="2" />
    ))}
  </svg>
);
const Center = () => (
  <div className="ml-[4px] w-[2118px] shrink-0 flex flex-col">
    <div className="flex h-[41px] mb-[2px] shrink-0 text-[18.500px] text-[#777] bg-[#2a2a2a]">
      <div className="w-[701px] pt-[3px] flex items-center justify-center border-r-2 border-[#222]">mask to curve issue.afphoto [M]</div>
      <div className="w-[700px] pt-[3px] flex items-center justify-center">&lt;Untitled&gt; [M]</div>
      <div className="w-[698px] pt-[3px] flex items-center justify-center bg-[#333] text-[#b4b4b4]">inspectionsticker_tab</div>
    </div>
    <HRuler />
    <div className="flex">
      <VRuler />
      <Canvas />
    </div>
  </div>
);
const Strip = () => (
  <div className="w-[28px] shrink-0 flex flex-col bg-[#333]">
    <div className="h-[43px] bg-[#2a2a2a] shrink-0" />
    <div className="h-[494px] shrink-0" />
    <div className="ml-[6px] w-[14px] h-[699px] rounded-full bg-[#555] shrink-0" />
  </div>
);

/* ---------- right panel ---------- */
const SliderRow = ({ l, v, thumb, track, inner, className = "" }: { l: string; v: string; thumb: string; track: string; inner?: string; className?: string }) => (
  <div className={`flex items-center h-[38px] ${className}`}>
    <span className="w-[40px] pl-[15px] text-[22px] text-[#ddd] shrink-0">{l}</span>
    <div className={`relative w-[398px] h-[20px] rounded-full border-b-2 border-[#777] shrink-0 ${track}`}>
      <div className={`absolute top-[-2px] w-[22px] h-[22px] rounded-full border-[4px] border-white shadow-[0_0_0_1px_#222] ${thumb} ${inner}`} />
    </div>
    <Well className="ml-[9px] w-[71px] h-[38px] pl-[5px] pt-[3px] text-[24px]">{v}</Well>
  </div>
);
const Check = ({ on, className = "" }: { on?: boolean; className?: string }) => (
  <div className={`w-[26px] h-[26px] rounded-[5px] bg-[#3b3b3b] border-[3px] border-[#272727] flex items-center justify-center shrink-0 ${className}`}>
    {on && <svg width="16" height="16" viewBox="0 0 16 16"><path d="M2 9 L6 14 L14 2" fill="none" stroke="#fff" strokeWidth="1.800" /></svg>}
  </div>
);
const Thumb = ({ children, className = "" }: CN) => <div className={`w-[60px] h-[60px] shrink-0 border-2 border-black bg-[#272727] overflow-hidden ${className}`}>{children}</div>;
const Expander = ({ open }: { open?: boolean }) => (
  <div className={`w-[28px] h-[28px] rounded-full bg-[#2a2a2a] flex items-center justify-center shrink-0 ${open ? "border-2 border-[#bbb]" : ""}`}>
    <Tri d={open ? "down" : "right"} s={15} c="#bdbdbd" />
  </div>
);
const LayerRow = ({ children, check, className = "" }: CN & { check?: boolean }) => (
  <div className={`relative flex items-center h-[66px] border-b-2 border-[#262626] shrink-0 ${className}`}>
    {children}
    <Check on={check} className="absolute left-[440px] top-[18px]" />
  </div>
);
const Mini = ({ num, bgWhite, label, ticks: t = true, fill = "#7dc1dd", line = "#fff" }: { num?: string; bgWhite?: boolean; label?: boolean; ticks?: boolean; fill?: string; line?: string }) => (
  <svg width="56" height="56" viewBox="-60 -60 120 120" className="block">
    {bgWhite && <rect x="-60" y="-60" width="120" height="120" fill="#fff" />}
    <circle r="58" fill={fill} stroke={line === "#ccc" ? "#bbb" : "none"} strokeWidth="2" />
    {t && ticks.map((a) => <line key={a} x1="0" y1="-57" x2="0" y2="-40" stroke={line} strokeWidth="2" transform={`rotate(${a})`} />)}
    {t && <circle r="12" fill="none" stroke={line} strokeWidth="2" />}
    {num && range(1, 12, 1).map((n) => <text key={n} x="0" y="-44" textAnchor="middle" fontSize="11" fill={num} fontFamily="Liberation Sans" transform={`rotate(${-10 + (n - 6) * 20})`}>{n}</text>)}
    {label && <text x="0" y="-3" textAnchor="middle" fontSize="11" fill="#333" fontFamily="Liberation Sans">Nächste</text>}
    {label && <text x="0" y="11" textAnchor="middle" fontSize="11" fill="#333" fontFamily="Liberation Sans">Wartung</text>}
  </svg>
);
const LName = "ml-[11px] text-[24px] whitespace-nowrap";

const RightPanel = () => (
  <div className="w-[526px] shrink-0 flex flex-col bg-[#414141] overflow-hidden">
    <div className="flex items-center h-[44px] bg-[#2d2d2d] border-b-2 border-[#1f1f1f] shrink-0">
      <Grip className="ml-[14px]" />
      <Tab t="Colour" on className="ml-[16px] w-[88px] !mt-[4px] !h-[40px] !pt-[5px]" />
      <Menu className="ml-auto mr-[-2px]" />
    </div>
    <div className="relative h-[419px] shrink-0 border-b-4 border-[#333]">
      <div className="flex items-start h-[108px] pt-[17px]">
        <ColorWidget small className="ml-[16px]" />
        <svg width="31" height="31" viewBox="0 0 31 31" className="ml-[19px] mt-[1px] shrink-0"><path d="M1 30 L4 22 L17 9 L22 14 L9 27 Z" fill="#a5a5a5" stroke="#666" /><circle cx="24" cy="7" r="6" fill="#c08a3e" /><path d="M15 9 L22 16" stroke="#7a5525" strokeWidth="3" /></svg>
        <div className="ml-[5px] mt-[1px] w-[29px] h-[29px] rounded-full bg-black border-2 border-[#333] shrink-0" />
        <div className="ml-[100px] mt-[9px] w-[39px] h-[44px] bg-[#3a3a3a] flex items-center justify-center shrink-0">
          <svg width="17" height="24" viewBox="0 0 17 24"><path d="M4 11V6C4 0 13 0 13 6V11" fill="none" stroke="#aaa" strokeWidth="2" /><rect x="0.500" y="10" width="16" height="13" rx="2" fill="#aaa" /></svg>
        </div>
        <div className="ml-[8px] mt-[11px] w-[183px] h-[40px] rounded-[5px] border-2 border-[#2a2a2a] bg-[#3f3f3f] flex items-center justify-between px-[9px] text-[23px] text-[#ddd] shrink-0"><span className="pt-[2px]">HSL</span><Stepper /></div>
      </div>
      <SliderRow l="H" v="54" track="bg-[linear-gradient(90deg,#d9382e,#f5b041_14%,#e8dc3c_18%,#7fb241_38%,#78c0d8_52%,#5ab4e8_55%,#3a4f9e_68%,#3f4596_75%,#c8408c_90%,#d9382e)]" thumb="left-[57px]" inner="bg-[#e3d83c]" />
      <SliderRow l="S" v="3" className="mt-[4px]" track="bg-[linear-gradient(90deg,#1b1b1b,#332c1a)]" thumb="left-[11px]" inner="bg-[#1c1c1c]" />
      <SliderRow l="L" v="11" className="mt-[4px]" track="bg-[linear-gradient(90deg,#000,#1c1c1c_15%,#77756f_50%,#bdbcb7_75%,#fff)]" thumb="left-[42px]" inner="bg-[#1c1c1c]" />
      <div className="ml-[16px] mt-[11px] w-[500px] h-[93px] border-2 border-black bg-[linear-gradient(180deg,#fff,#a8a8a8_30%,#7d7f7d_55%,#3a3a3a_78%,#000)]" />
      <div className="ml-[16px] mt-[8px] text-[22px] leading-[26px] text-[#ccc]">Opacity</div>
      <div className="flex items-center h-[43px]">
        <div className="ml-[18px] w-[26px] h-[26px] rounded-full bg-[#1c1c1c] shrink-0" />
        <div className="relative ml-[13px] w-[324px] h-[20px] rounded-full border-b-2 border-[#777] bg-[linear-gradient(90deg,#ffffff00,#2e2e2e_95%),conic-gradient(#e8e8e8_25%,#777_0_50%,#e8e8e8_0_75%,#777_0)] bg-[length:100%_100%,16px_16px] shrink-0">
          <div className="absolute top-[-2px] left-[302px] w-[22px] h-[22px] rounded-full bg-[#1c1c1c] border-[4px] border-white shadow-[0_0_0_1px_#111]" />
        </div>
        <div className="ml-[19px] w-[121px] h-[43px] flex rounded-[5px] border-2 border-[#333] overflow-hidden shrink-0">
          <div className="w-[87px] bg-[#363636] flex items-center pl-[5px] text-[24px] text-[#ddd] whitespace-nowrap">100 %</div>
          <div className="flex-1 flex items-center justify-center bg-[#3c3c3c]"><Tri s={13} /></div>
        </div>
      </div>
    </div>
    <div className="flex items-center h-[44px] mt-[5px] bg-[#2d2d2d] border-b-2 border-[#1f1f1f] shrink-0">
      <Grip className="ml-[14px]" />
      <Tab t="Layers" on className="ml-[16px] w-[88px] !mt-[2px] !h-[42px] !pt-[6px]" />
      <Tab t="FX" className="ml-[32px] w-[62px]" />
      <TSep />
      <Tab t="Apr" className="ml-[25px] w-[65px]" />
      <TSep />
      <Tab t="TSt" className="ml-[22px] w-[66px]" />
      <TSep />
      <Tab t="Styles" className="ml-[11px] w-[85px]" />
      <Menu className="ml-auto mr-[-2px]" />
    </div>
    <div className="flex items-center h-[59px] shrink-0 border-b-2 border-[#333]">
      <span className="ml-[11px] w-[99px] text-[22px] text-[#ddd] shrink-0 pt-[2px]">Opacity:</span>
      <Well className="ml-[10px] w-[97px] h-[41px]"><span className="pl-[4px] pt-[3px] flex-1 text-[24px] whitespace-nowrap">100 %</span><div className="pr-[5px]"><Tri s={11} /></div></Well>
      <div className="ml-[6px] w-[220px] h-[39px] rounded-[5px] border-2 border-[#2a2a2a] bg-[#3f3f3f] flex items-center justify-between px-[9px] text-[23px] text-[#ddd] shrink-0"><span className="pt-[4px]">Normal</span><Stepper /></div>
      <svg width="25" height="25" viewBox="0 0 24 24" className="ml-[9px] shrink-0"><path fill="#a5a5a5" d="M10 1h4l.6 3 2.400 1 2.600-1.700 2.800 2.800L20 8.700l1 2.400 3 .6v4l-3 .6-1 2.400 1.700 2.600-2.800 2.800-2.600-1.700-2.400 1-.6 3h-4l-.6-3-2.400-1-2.600 1.700-2.800-2.800L4 18.700l-1-2.400-3-.6v-4l3-.6 1-2.400-1.700-2.600 2.800-2.800L7 5l2.400-1z" transform="scale(.96) translate(0 -2)" /><circle cx="12" cy="11.500" r="4" fill="#414141" /></svg>
      <svg width="17" height="24" viewBox="0 0 17 24" className="ml-[18px] shrink-0"><path d="M4 11V6C4 0 13 0 13 6V11" fill="none" stroke="#a5a5a5" strokeWidth="2" /><rect x="0.500" y="10" width="16" height="13" rx="2" fill="#a5a5a5" /></svg>
    </div>
    <div className="h-[906px] shrink-0 bg-[#333] flex flex-col">
      <LayerRow>
        <div className="ml-[8px]"><Expander /></div>
        <Thumb className="ml-[6px]"><Mini fill="#272727" ticks={false} num="#444" /></Thumb>
        <span className={LName}><b className="font-bold text-white">Ebene1</b><span className="text-[#999]"> (Layer)</span></span>
        <div className="absolute left-[106px] top-[61px] w-[376px] h-[2px] bg-[linear-gradient(90deg,transparent,#4a8ae0_70%)]" />
      </LayerRow>
      <LayerRow check className="bg-[linear-gradient(90deg,#444d5c_482px,transparent_482px)]">
        <div className="ml-[8px]"><Expander open /></div>
        <Thumb className="ml-[6px]"><Mini /></Thumb>
        <span className={LName}><b className="font-bold text-white">Ebene1</b><span className="text-[#a6abb3]"> (Layer)</span></span>
        <div className="absolute left-[106px] top-[60px] w-[376px] h-[2px] bg-[linear-gradient(90deg,transparent,#4a8ae0_70%)]" />
      </LayerRow>
      <LayerRow check>
        <Thumb className="ml-[62px]"><Mini fill="#272727" line="#ccc" /></Thumb>
        <span className={`${LName} text-[#8e8e8e]`}>(Cog)</span>
      </LayerRow>
      <LayerRow check className="bg-[#5d7ba5]">
        <Thumb className={`ml-[62px] flex items-center justify-center text-[38px] text-[#ccc] ${Serif}`}>A</Thumb>
        <span className={`${LName} text-[#a8bcd8] whitespace-pre`}>(1  2  3  4  5  6  7  8  9)</span>
      </LayerRow>
      <LayerRow check>
        <Thumb className="ml-[62px]"><Mini ticks={false} /></Thumb>
        <span className={`${LName} text-[#8e8e8e]`}>(Ellipse)</span>
      </LayerRow>
      <LayerRow>
        <div className="ml-[8px]"><Expander /></div>
        <Thumb className="ml-[6px] !bg-white"><Mini bgWhite num="#222" ticks={false} label /></Thumb>
        <span className="ml-[18px] text-[24px] whitespace-nowrap"><b className="font-bold text-white">[IDML]</b><span className="text-[#8e8e8e]"> (Picture Frame)</span></span>
      </LayerRow>
      <div className="flex-1" />
    </div>
    <div className="flex items-center h-[49px] shrink-0 border-t-2 border-[#252525] border-b-4 border-b-[#383838]">
      <div className="ml-[9px] w-[42px] h-[40px] bg-[#383838] flex items-center justify-center shrink-0"><svg width="32" height="26" viewBox="0 0 32 26"><path d="M0 5L16 0L32 5V8L16 13L0 8Z" fill="#a8a8a8" /><path d="M0 11L16 16L32 11V14L16 20L0 14ZM0 18L16 23L32 18V20L16 26L0 20Z" fill="#a8a8a8" /></svg></div>
      <svg width="28" height="24" viewBox="0 0 28 24" className="ml-[119px] shrink-0"><rect width="28" height="24" fill="#a5a5a5" /><circle cx="14" cy="12" r="8" fill="#333" /></svg>
      <svg width="24" height="24" viewBox="0 0 24 24" className="ml-[20px] shrink-0"><circle cx="12" cy="12" r="11" fill="none" stroke="#a5a5a5" strokeWidth="1.500" /><path d="M16 3 L8 21 A11 11 0 0 1 16 3Z" fill="#a5a5a5" /></svg>
      <span className={`ml-[19px] w-[26px] text-[28px] italic text-[#a5a5a5] shrink-0 ${Serif}`}>fx</span>
      <svg width="20" height="24" viewBox="0 0 20 24" className="ml-[118px] shrink-0"><path d="M1 1H12L19 8V23H1Z M12 1V8H19" fill="none" stroke="#a5a5a5" strokeWidth="1.500" /></svg>
      <svg width="20" height="24" viewBox="0 0 20 24" className="ml-[26px] shrink-0"><rect width="20" height="24" fill="#a5a5a5" /><path d="M0 0h5v6H0zM10 0h5v6h-5zM5 6h5v6H5zM15 6h5v6h-5zM0 12h5v6H0zM10 12h5v6h-5zM5 18h5v6H5zM15 18h5v6h-5z" fill="#333" /></svg>
      <svg width="18" height="26" viewBox="0 0 18 26" className="ml-[26px] shrink-0"><path d="M0 4H18M6 3V1H12V3" stroke="#a5a5a5" strokeWidth="2" fill="none" /><path d="M2 7H16V25H2Z M6 9V23M9 9V23M12 9V23" fill="none" stroke="#a5a5a5" strokeWidth="1.500" /></svg>
    </div>
    <div className="flex items-center h-[43px] bg-[#2d2d2d] border-b-2 border-[#1f1f1f] shrink-0">
      <Grip className="ml-[14px]" />
      <Tab t="Stock" className="ml-[22px] w-[76px] !pt-[10px]" />
      <Tab t="Transform" on className="w-[128px] !pt-[10px]" />
      <Tab t="His" className="ml-[24px] w-[60px] !pt-[10px]" />
      <TSep />
      <Tab t="Nvg" className="ml-[15px] w-[63px] !pt-[10px]" />
      <TSep />
      <Tab t="Snp" className="ml-[19px] !pt-[10px]" />
    </div>
    <div className="flex flex-1 pt-[21px] text-[23px] text-[#ddd]">
      <div className="relative ml-[34px] mt-[20px] w-[78px] h-[78px] shrink-0">
        <div className="grid grid-cols-3 w-full h-full justify-items-center items-center bg-[radial-gradient(#696969,#696969)] bg-[length:66px_66px] bg-center bg-no-repeat">
          <div className="w-[11px] h-[11px] bg-white justify-self-start self-start" />
          <div className="w-[11px] h-[11px] bg-[#a5a5a5] self-start" />
          <div className="w-[11px] h-[11px] bg-[#a5a5a5] justify-self-end self-start" />
          <div className="w-[11px] h-[11px] bg-[#a5a5a5] justify-self-start" />
          <div className="w-[19px] h-[19px] bg-[#a5a5a5]" />
          <div className="w-[11px] h-[11px] bg-[#a5a5a5] justify-self-end" />
          <div className="w-[11px] h-[11px] bg-[#a5a5a5] justify-self-start self-end" />
          <div className="w-[11px] h-[11px] bg-[#a5a5a5] self-end" />
          <div className="w-[11px] h-[11px] bg-[#a5a5a5] justify-self-end self-end" />
        </div>
      </div>
      <div className="ml-[20px] grid grid-cols-[42px_119px_49px_120px] gap-y-[5px] h-[150px] items-center">
        <span className="text-right pr-[7px]">X:</span><Well className="h-[39px] pl-[5px] text-[24px] pt-[3px]">400 px</Well>
        <span className="text-right pr-[7px]">W:</span><Well className="h-[39px] pl-[5px] text-[24px] pt-[3px]">800 px</Well>
        <span className="text-right pr-[7px]">Y:</span><Well className="h-[39px] pl-[5px] text-[24px] pt-[3px]">400 px</Well>
        <span className="text-right pr-[7px]">H:</span><Well className="h-[39px] pl-[5px] text-[24px] pt-[3px]">800 px</Well>
        <span className="text-right pr-[7px] mt-[19px]">R:</span><Well className="h-[39px] mt-[19px] pl-[5px] pr-[6px] text-[24px] pt-[3px] justify-between">0 °<Tri s={11} /></Well>
        <span className="text-right pr-[7px] mt-[19px]">S:</span><Well className="h-[39px] mt-[19px] pl-[5px] pr-[6px] text-[24px] pt-[3px] justify-between">0 °<Tri s={11} /></Well>
      </div>
      <svg width="14" height="44" viewBox="0 0 14 44" className="ml-[16px] mt-[20px] shrink-0"><path d="M0 1H10V44H0" fill="none" stroke="#bbb" strokeWidth="1.500" /><ellipse cx="10" cy="14" rx="3" ry="5" fill="#414141" stroke="#bbb" strokeWidth="1.500" /><ellipse cx="10" cy="30" rx="3" ry="5" fill="#414141" stroke="#bbb" strokeWidth="1.500" /></svg>
    </div>
  </div>
);

export default function App() {
  return (
    <div className="relative w-[3340px] h-[1900px] overflow-hidden bg-[#222] flex flex-col font-[Inter,'Liberation_Sans',sans-serif]">
      <div className="h-[168px] shrink-0 flex flex-col bg-[linear-gradient(180deg,#3e3e3e,#333_50%)] rounded-t-[16px]">
        <Toolbar1 />
        <Toolbar2 />
      </div>
      <div className="flex h-[1732px]">
        <Tools />
        <LeftPanel />
        <Center />
        <Strip />
        <RightPanel />
      </div>
    </div>
  );
}
